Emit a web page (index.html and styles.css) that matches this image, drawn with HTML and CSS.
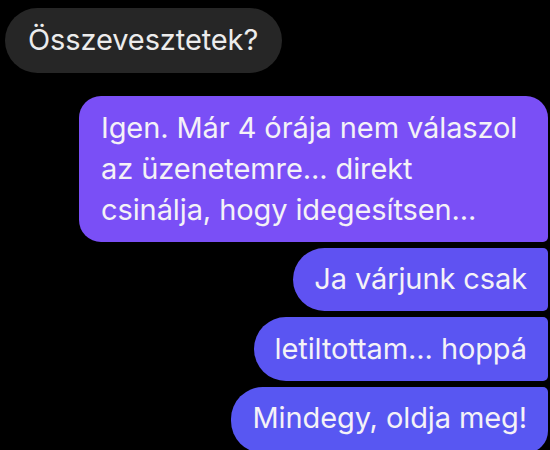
FILE: index.html
```html
<!DOCTYPE html>
<html lang="hu">
<head>
<meta charset="utf-8">
<link rel="stylesheet" href="styles.css">
</head>
<body>
<div class="chat">
  <div class="msg in">Összevesztetek?</div>
  <div class="group">
    <div class="msg out first">Igen. Már 4 órája nem válaszol<br>az üzenetemre... direkt<br>csinálja, hogy idegesítsen...</div>
    <div class="msg out mid b2">Ja várjunk csak</div>
    <div class="msg out mid b3">letiltottam... hoppá</div>
    <div class="msg out last b4">Mindegy, oldja meg!</div>
  </div>
</div>
</body>
</html>
```
FILE: styles.css
```css
html, body {
  margin: 0;
  padding: 0;
  background: #000;
  width: 550px;
  height: 450px;
  overflow: hidden;
}
.chat {
  display: flex;
  flex-direction: column;
  padding: 8px 2px 0 5px;
  font-family: Inter, "Noto Sans", sans-serif;
  font-size: 29px;
  color: #f4f2f7;
}
.msg {
  white-space: nowrap;
  box-sizing: border-box;
  letter-spacing: -0.1px;
}
.in {
  align-self: flex-start;
  background: #262626;
  height: 65px;
  line-height: 64px;
  padding: 0 24px 0 23px;
  border-radius: 33px;
  color: #ececec;
}
.group {
  display: flex;
  flex-direction: column;
  align-items: flex-end;
  gap: 6px;
  margin-top: 23px;
}
.out {
  padding: 0 21px;
  background: #5a53f1;
}
.first {
  width: 469px;
  padding: 11px 20px 12px 22px;
  line-height: 41px;
  background: #7a4ff6;
  border-radius: 22px 22px 5px 22px;
}
.mid {
  height: 63px;
  line-height: 62px;
  border-radius: 32px 5px 5px 32px;
}
.b2 { background: #5f52f2; }
.b3 { height: 64px; line-height: 63px; background: #5a55f2; }
.last {
  height: 66px;
  line-height: 62px;
  border-radius: 32px 5px 22px 32px;
  background: #5857f2;
}
```
